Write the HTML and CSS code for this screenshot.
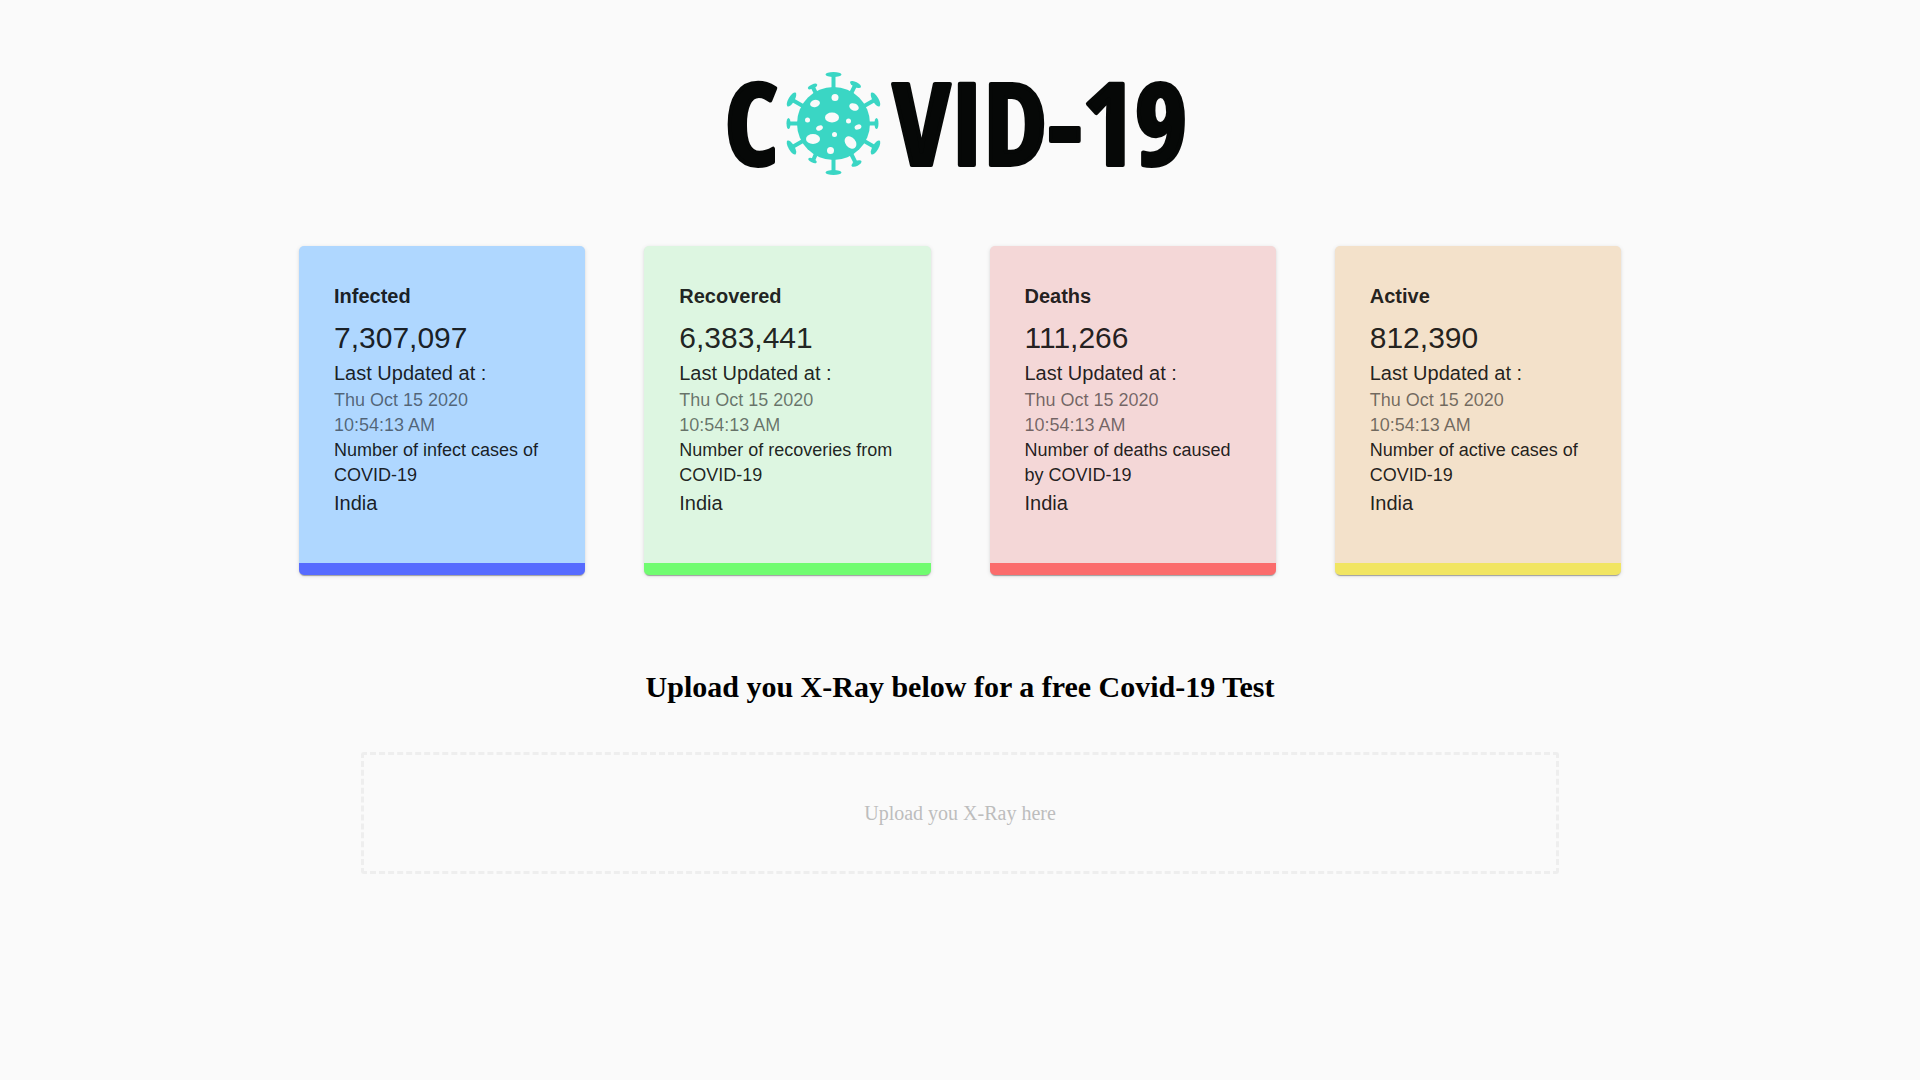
FILE: index.html
```html
<!DOCTYPE html>
<html lang="en">
<head>
<meta charset="utf-8">
<meta name="viewport" content="width=device-width, initial-scale=1">
<title>COVID-19 Tracker</title>
<link rel="stylesheet" href="styles.css">
</head>
<body>
<main class="page">
  <h1 class="logo">
    <svg class="logo-art" viewBox="0 0 470 110" role="img" aria-label="COVID-19">
      <text class="logo-text" x="0" y="96">C</text>
      <text class="logo-text" x="168" y="96">VID-19</text>
      <g class="virus" transform="translate(108.500 54.500)">
        <circle r="36.500"/>
        <g>
          <path d="M0-34V-50M0 34V50M-28-16L-42-24M28-16L42-24M-28 16L-42 24M28 16L42 24M-35 0H-44M35 0H43M17-29L22-39M-17-29L-21-37M17 29L22 39M-17 29L-20 36"/>
          <ellipse cy="-49" rx="8" ry="2.500"/>
          <ellipse cy="49" rx="8" ry="2.500"/>
          <ellipse cx="-45" ry="5.500" rx="2"/>
          <ellipse cx="43" ry="5.500" rx="2"/>
          <ellipse rx="8" ry="3" transform="translate(-42 -24) rotate(-60)"/>
          <ellipse rx="8" ry="3" transform="translate(42 -24) rotate(60)"/>
          <ellipse rx="8" ry="3" transform="translate(-42 24) rotate(60)"/>
          <ellipse rx="8" ry="3" transform="translate(42 24) rotate(-60)"/>
          <ellipse rx="6" ry="2.500" transform="translate(22 -39) rotate(27)"/>
          <ellipse rx="5" ry="2" transform="translate(-21 -37) rotate(-25)"/>
          <ellipse rx="5.500" ry="2.500" transform="translate(23 40) rotate(-27)"/>
          <ellipse rx="4.500" ry="2" transform="translate(-21 37) rotate(25)"/>
        </g>
        <g class="spots">
          <ellipse cx="-1.500" cy="-6" rx="7" ry="5"/>
          <circle cx="1.500" cy="-26" r="3.500"/>
          <ellipse rx="5" ry="3.500" transform="translate(-18.500 -20) rotate(-15)"/>
          <ellipse rx="5" ry="3.500" transform="translate(20.500 -16.500) rotate(25)"/>
          <circle cx="-26" cy="-3.500" r="2.500"/>
          <circle cx="15" cy="-2.500" r="2.500"/>
          <ellipse rx="3.500" ry="2.500" transform="translate(-14 4.500) rotate(-25)"/>
          <ellipse rx="3.500" ry="2.500" transform="translate(24.500 3.500) rotate(-20)"/>
          <circle cx="1" cy="11" r="2.500"/>
          <ellipse cx="-20.500" cy="15.500" rx="7" ry="5"/>
          <ellipse rx="7" ry="5" transform="translate(17 19) rotate(50)"/>
          <circle cx="-3" cy="27" r="3.500"/>
        </g>
      </g>
    </svg>
  </h1>

  <section class="cards" aria-label="Statistics for India">
    <article class="card infected">
      <h2 class="card-title">Infected</h2>
      <p class="count">7,307,097</p>
      <p class="body">Last Updated at :</p>
      <p class="date">Thu Oct 15 2020</p>
      <p class="date">10:54:13 AM</p>
      <p class="note">Number of infect cases of COVID-19</p>
      <p class="body">India</p>
    </article>
    <article class="card recovered">
      <h2 class="card-title">Recovered</h2>
      <p class="count">6,383,441</p>
      <p class="body">Last Updated at :</p>
      <p class="date">Thu Oct 15 2020</p>
      <p class="date">10:54:13 AM</p>
      <p class="note">Number of recoveries from COVID-19</p>
      <p class="body">India</p>
    </article>
    <article class="card deaths">
      <h2 class="card-title">Deaths</h2>
      <p class="count">111,266</p>
      <p class="body">Last Updated at :</p>
      <p class="date">Thu Oct 15 2020</p>
      <p class="date">10:54:13 AM</p>
      <p class="note">Number of deaths caused by COVID-19</p>
      <p class="body">India</p>
    </article>
    <article class="card active">
      <h2 class="card-title">Active</h2>
      <p class="count">812,390</p>
      <p class="body">Last Updated at :</p>
      <p class="date">Thu Oct 15 2020</p>
      <p class="date">10:54:13 AM</p>
      <p class="note">Number of active cases of COVID-19</p>
      <p class="body">India</p>
    </article>
  </section>

  <section class="upload">
    <h2 class="upload-title">Upload you X-Ray below for a free Covid-19 Test</h2>
    <button type="button" class="dropzone">Upload you X-Ray here</button>
  </section>
</main>
</body>
</html>
```
FILE: styles.css
```css
* {
  box-sizing: border-box;
}

body {
  margin: 0;
  background: #fafafa;
  color: #000;
  font-family: "Liberation Serif", "Times New Roman", serif;
}

h1,
h2,
p {
  margin: 0;
}

.page {
  display: flex;
  flex-direction: column;
  align-items: center;
  padding: 69px 32px;
}

.logo {
  width: 100%;
  max-width: 470px;
}

.logo-art {
  display: block;
  width: 100%;
  overflow: visible;
}

.logo-text {
  fill: #060807;
  stroke: #060807;
  stroke-width: 4px;
  stroke-linejoin: round;
  font-family: "Open Sans Condensed", "Roboto Condensed", sans-serif;
  font-size: 113px;
  font-weight: 700;
}

.virus {
  fill: #3ad6c4;
}

.virus path {
  stroke: #3ad6c4;
  stroke-width: 4px;
}

.spots {
  fill: #fafafa;
}

.cards {
  display: grid;
  grid-template-columns: repeat(auto-fit, minmax(260px, 1fr));
  gap: 59px;
  width: 100%;
  max-width: 1322px;
  margin-top: 67px;
}

.card {
  padding: 35px 35px 45px;
  border-bottom: 12px solid;
  border-radius: 5px;
  box-shadow: 0 3px 1px -2px rgba(0, 0, 0, 0.2), 0 1px 1px rgba(0, 0, 0, 0.14), 0 1px 4px rgba(0, 0, 0, 0.12);
  color: rgba(0, 0, 0, 0.87);
  font-family: "Liberation Sans", Arial, sans-serif;
}

.infected {
  background: #afd7ff;
  border-color: #566bff;
}

.recovered {
  background: #ddf6e1;
  border-color: #70fc70;
}

.deaths {
  background: #f4d7d7;
  border-color: #fb6c6c;
}

.active {
  background: #f3e1ca;
  border-color: #f1e562;
}

.card-title,
.body {
  font-size: 20px;
  line-height: 30px;
}

.card-title {
  margin-bottom: 7px;
}

.count {
  font-size: 30px;
  line-height: 40px;
}

.date,
.note {
  font-size: 18px;
  line-height: 25px;
}

.date {
  color: rgba(0, 0, 0, 0.54);
}

.upload {
  display: flex;
  flex-direction: column;
  gap: 47px;
  width: 100%;
  max-width: 1198px;
  margin-top: 94px;
}

.upload-title {
  font-size: 30px;
  line-height: 36px;
  text-align: center;
}

.dropzone {
  width: 100%;
  padding: 46px 24px;
  border: 3px dashed #eee;
  border-radius: 3px;
  background: #fafafa;
  color: #bdbdbd;
  font: inherit;
  font-size: 20px;
  line-height: 24px;
  cursor: pointer;
}
```
